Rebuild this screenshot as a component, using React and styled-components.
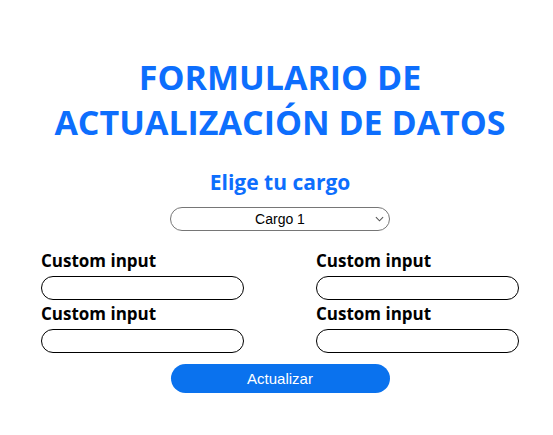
import React from 'react';
import styled, { createGlobalStyle } from 'styled-components';

const GlobalStyle = createGlobalStyle`
  body {
    margin: 0;
    background: #ffffff;
    font-family: 'Open Sans', 'Noto Sans', sans-serif;
  }
`;

const fields = ['Custom input', 'Custom input', 'Custom input', 'Custom input'];

const App = () => {
  return (
    <>
      <GlobalStyle />
      <Page>
        <Title>FORMULARIO DE<br />ACTUALIZACIÓN DE DATOS</Title>
        <Subtitle>Elige tu cargo</Subtitle>
        <SelectWrapper>
          <Select defaultValue="1">
            <option value="1">Cargo 1</option>
            <option value="2">Cargo 2</option>
            <option value="3">Cargo 3</option>
          </Select>
          <Chevron viewBox="0 0 10 6" aria-hidden="true">
            <path d="M1 1l4 4 4-4" />
          </Chevron>
        </SelectWrapper>
        <FieldGrid>
          {fields.map((label, i) => (
            <Field key={i}>
              <Label>{label}</Label>
              <Input type="text" />
            </Field>
          ))}
        </FieldGrid>
        <Button type="button">Actualizar</Button>
      </Page>
    </>
  );
};

export default App;

const Page = styled.div`
  display: flex;
  flex-direction: column;
  align-items: center;
  padding: 55px 0 0 7px;
`;

const Title = styled.h1`
  margin: 0;
  font-size: 34px;
  line-height: 45px;
  font-weight: 700;
  text-align: center;
  color: #0d6efd;
`;

const Subtitle = styled.h2`
  margin: 23px 0 0;
  font-size: 21px;
  line-height: 28px;
  font-weight: 700;
  color: #0d6efd;
`;

const SelectWrapper = styled.div`
  position: relative;
  margin-top: 11px;
  width: 220px;
  height: 24px;
`;

const Select = styled.select`
  box-sizing: border-box;
  appearance: none;
  -webkit-appearance: none;
  width: 100%;
  height: 24px;
  margin: 0;
  padding: 0 14px;
  border: 1px solid #767676;
  border-radius: 12px;
  background: #ffffff;
  font-family: 'Liberation Sans', Arial, sans-serif;
  font-size: 14px;
  color: #000000;
  text-align: center;
  text-align-last: center;
`;

const Chevron = styled.svg`
  position: absolute;
  right: 6px;
  top: 9px;
  width: 9px;
  height: 6px;
  fill: none;
  stroke: #555555;
  stroke-width: 1.2;
  pointer-events: none;
`;

const FieldGrid = styled.div`
  display: grid;
  grid-template-columns: 203px 203px;
  column-gap: 72px;
  row-gap: 2px;
  margin-top: 18px;
`;

const Field = styled.div`
  display: flex;
  flex-direction: column;
`;

const Label = styled.label`
  font-size: 17px;
  line-height: 24px;
  font-weight: 700;
  color: #000000;
  margin-bottom: 3px;
`;

const Input = styled.input`
  box-sizing: border-box;
  width: 203px;
  height: 24px;
  border: 1px solid #000000;
  border-radius: 12px;
  padding: 0 10px;
  background: #ffffff;
`;

const Button = styled.button`
  margin-top: 11px;
  width: 219px;
  height: 29px;
  border: none;
  border-radius: 15px;
  background: #0a72ee;
  color: #ffffff;
  font-family: 'Liberation Sans', Arial, sans-serif;
  font-size: 15px;
  cursor: pointer;
`;
